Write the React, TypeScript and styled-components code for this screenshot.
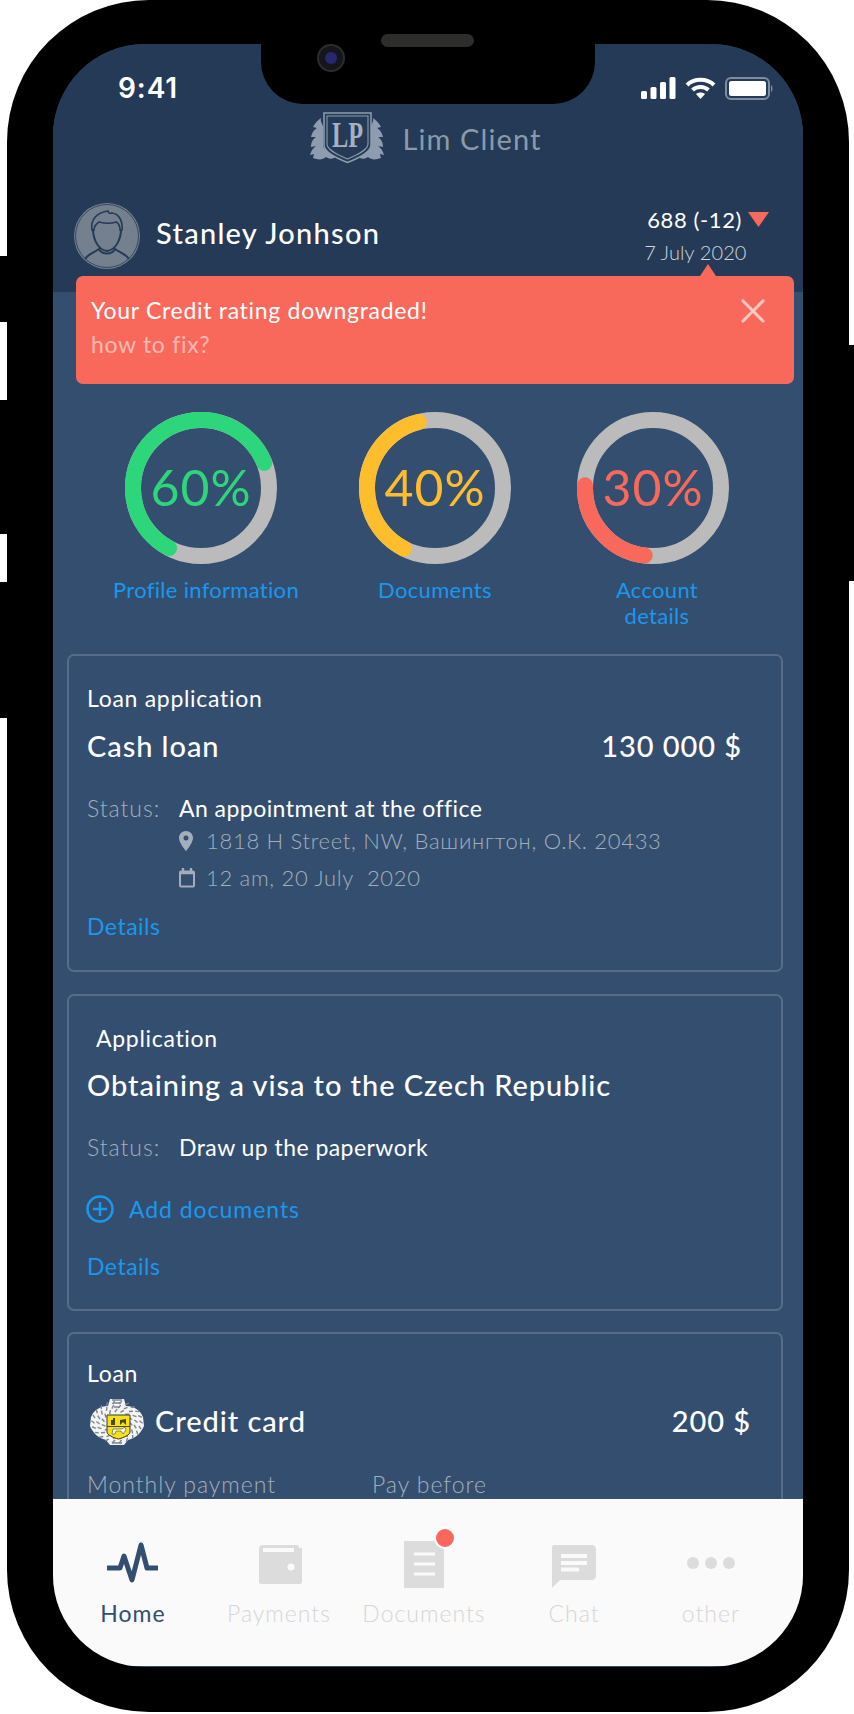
import React from "react";
import styled, { createGlobalStyle } from "styled-components";

const Global = createGlobalStyle`
  html, body { margin: 0; padding: 0; background: #fff; }
  body { width: 854px; height: 1714px; overflow: hidden; font-family: Lato, "Noto Sans", sans-serif; font-weight: 300; }
  * { box-sizing: border-box; }
`;

const Page = styled.div`
  position: relative;
  width: 854px;
  height: 1714px;
  padding-left: 7px;
`;
const SideButton = styled.div<{ $side: "left" | "right"; $top: number; $h: number }>`
  position: absolute;
  ${(p) => (p.$side === "left" ? "left: 0;" : "right: 0;")}
  top: ${(p) => p.$top}px;
  width: 10px;
  height: ${(p) => p.$h}px;
  background: #000;
`;
const Frame = styled.div`
  position: relative;
  width: 842px;
  height: 1712px;
  padding: 44px 46px 45px;
  background: #000;
  border-radius: 142px;
`;
const Notch = styled.div`
  position: absolute;
  left: 254px;
  top: 30px;
  width: 334px;
  height: 74px;
  background: #000;
  border-radius: 0 0 42px 42px;
`;
const Camera = styled.div`
  position: absolute;
  left: 56px;
  top: 14px;
  width: 28px;
  height: 28px;
  border-radius: 50%;
  background: #15151c;
  border: 2px solid #2c2c2c;
  display: flex;
  align-items: center;
  justify-content: center;
  &::after { content: ""; width: 12px; height: 12px; border-radius: 50%; background: #27296e; }
`;
const Speaker = styled.div`
  position: absolute;
  left: 120px;
  top: 4px;
  width: 93px;
  height: 13px;
  border-radius: 7px;
  background: #2d2d2b;
`;
const Screen = styled.div`
  width: 750px;
  height: 1623px;
  border-radius: 92px;
  overflow: hidden;
  background: #344e6f;
  display: flex;
  flex-direction: column;
`;
const Header = styled.header`
  flex: none;
  height: 248px;
  background: #243a56;
  padding-top: 30px;
`;
const StatusBar = styled.div`
  display: flex;
  justify-content: space-between;
  align-items: center;
  height: 28px;
  padding: 0 29px 0 65px;
`;
const Clock = styled.span`
  font-family: Inter, sans-serif;
  font-size: 28px;
  font-weight: 600;
  letter-spacing: 0.9px;
  line-height: 26px;
  color: #fff;
`;
const StatusIcons = styled.div`
  display: flex;
  align-items: center;
  gap: 9px;
`;
const Brand = styled.div`
  display: flex;
  align-items: center;
  justify-content: center;
  height: 52px;
  margin: 10px 5px 0 0;
  gap: 18px;
`;
const BrandName = styled.span`
  font-size: 29px;
  font-weight: 400;
  letter-spacing: 1.1px;
  color: #8b9aab;
  padding-top: 1px;
`;
const UserRow = styled.div`
  display: flex;
  justify-content: space-between;
  margin-top: 39px;
  padding: 0 34px 0 21px;
`;
const UserInfo = styled.div`
  display: flex;
  align-items: center;
  gap: 16px;
`;
const UserName = styled.span`
  font-size: 29px;
  font-weight: 500;
  letter-spacing: 1.27px;
  padding-bottom: 8px;
  color: #fff;
`;
const Score = styled.div`
  display: flex;
  flex-direction: column;
  align-items: flex-start;
`;
const ScoreValue = styled.div`
  display: flex;
  align-items: center;
  gap: 6px;
  height: 32px;
  font-size: 22px;
  font-weight: 400;
  letter-spacing: 0.6px;
  color: #fff;
`;
const ScoreDate = styled.div`
  font-size: 20px;
  letter-spacing: 0.1px;
  line-height: 26px;
  margin: 4px 0 0 -3px;
  color: #d0d5db;
`;
const Body = styled.main`
  flex: 1;
  min-height: 0;
  overflow: hidden;
  margin-top: -28px;
  padding-top: 12px;
`;
const Alert = styled.div`
  position: relative;
  display: flex;
  justify-content: space-between;
  align-items: flex-start;
  height: 108px;
  margin: 0 9px 0 23px;
  padding: 17px 29px 0 15px;
  background: #f9695b;
  border-radius: 7px;
  &::before {
    content: "";
    position: absolute;
    left: 624px;
    top: -12px;
    border-left: 8px solid transparent;
    border-right: 8px solid transparent;
    border-bottom: 12px solid #f9695b;
  }
`;
const AlertTitle = styled.div`
  font-size: 23px;
  font-weight: 400;
  line-height: 34px;
  letter-spacing: 0.7px;
  color: #fff;
`;
const AlertLink = styled(AlertTitle)`
  color: rgba(255, 255, 255, 0.55);
`;
const CloseIcon = styled.svg`
  margin-top: 6px;
`;
const Rings = styled.section`
  display: grid;
  grid-template-columns: 296px 172px 264px;
  margin-top: 28px;
`;
const RingItem = styled.div`
  display: flex;
  flex-direction: column;
  align-items: center;
`;
const RingBox = styled.div`
  position: relative;
  width: 152px;
  height: 152px;
`;
const RingValue = styled.span<{ $color: string }>`
  position: absolute;
  inset: 0;
  display: flex;
  align-items: center;
  justify-content: center;
  padding-bottom: 2px;
  font-size: 50px;
  font-weight: 400;
  letter-spacing: 1px;
  color: ${(p) => p.$color};
`;
const RingLabel = styled.div<{ $shift: number; $w?: number }>`
  margin-top: 13px;
  padding-left: ${(p) => p.$shift}px;
  ${(p) => (p.$w ? `width: ${p.$w}px;` : "")}
  font-size: 22px;
  font-weight: 400;
  line-height: 26px;
  letter-spacing: 0.3px;
  text-align: center;
  color: #1a97ee;
`;
const Card = styled.article<{ $top?: number; $min?: number; $pb?: number }>`
  margin: ${(p) => p.$top ?? 22}px 20px 0 14px;
  padding: 29px 18px ${(p) => p.$pb ?? 30}px;
  border: 2px solid #566c87;
  border-radius: 7px;
  ${(p) => (p.$min ? `min-height: ${p.$min}px;` : "")}
`;
const CardLabel = styled.div<{ $indent?: number }>`
  font-size: 23px;
  font-weight: 400;
  line-height: 26px;
  letter-spacing: 0.7px;
  padding-left: ${(p) => p.$indent ?? 0}px;
  color: #fff;
`;
const CardHead = styled.div<{ $mr: number; $mt: number }>`
  display: flex;
  justify-content: space-between;
  align-items: center;
  margin: ${(p) => p.$mt}px ${(p) => p.$mr}px 0 0;
`;
const CardTitle = styled.div`
  font-size: 29px;
  font-weight: 500;
  line-height: 34px;
  letter-spacing: 0.93px;
  color: #fff;
`;
const StatusRow = styled.div`
  display: flex;
  margin-top: 30px;
  font-size: 23px;
  line-height: 30px;
  letter-spacing: 0.45px;
`;
const Muted = styled.span<{ $w?: number }>`
  ${(p) => (p.$w ? `width: ${p.$w}px;` : "")}
  letter-spacing: 0.95px;
  color: #a3aebc;
`;
const Bright = styled.span`
  font-weight: 400;
  color: #fff;
`;
const MetaRow = styled.div<{ $mt: number }>`
  display: flex;
  align-items: center;
  gap: 11px;
  margin: ${(p) => p.$mt}px 0 0 92px;
  font-size: 22px;
  line-height: 30px;
  letter-spacing: 0.7px;
  color: #a3aebc;
`;
const MetaIcon = styled.svg`
  flex: none;
`;
const Details = styled.div<{ $mt: number }>`
  margin-top: ${(p) => p.$mt}px;
  font-size: 23px;
  font-weight: 400;
  line-height: 26px;
  letter-spacing: 0.5px;
  color: #1a97ee;
`;
const AddRow = styled.div`
  display: flex;
  align-items: center;
  gap: 15px;
  margin: 32px 0 0 -1px;
  font-size: 23px;
  font-weight: 400;
  line-height: 30px;
  letter-spacing: 0.95px;
  color: #1a97ee;
`;
const CreditLabel = styled(CardLabel)`
  margin-top: -3px;
`;
const CreditHead = styled(CardHead)`
  height: 48px;
`;
const CreditTitle = styled.div`
  display: flex;
  align-items: center;
  gap: 11px;
  margin-left: 3px;
`;
const Columns = styled.div`
  display: grid;
  grid-template-columns: 285px 1fr;
  margin-top: 24px;
  font-size: 23px;
  line-height: 30px;
`;
const TabBar = styled.nav`
  flex: none;
  display: grid;
  grid-template-columns: 160px 132px 158px 142px 132px;
  height: 167px;
  margin-bottom: 1px;
  padding-top: 39px;
  background: #fafafa;
`;
const Tab = styled.div<{ $active?: boolean }>`
  position: relative;
  display: flex;
  flex-direction: column;
  align-items: center;
  font-size: 23px;
  font-weight: ${(p) => (p.$active ? 400 : 300)};
  line-height: 26px;
  letter-spacing: 1px;
  white-space: nowrap;
  color: ${(p) => (p.$active ? "#344e6f" : "#d6d6d6")};
`;
const TabIcon = styled.svg`
  width: 60px;
  height: 52px;
  margin-bottom: 10px;
`;
const Badge = styled.span`
  position: absolute;
  left: 89px;
  top: -11px;
  width: 22px;
  height: 22px;
  border-radius: 50%;
  background: #fb675c;
  border: 2px solid #fff;
`;

function Ring({ color, value, end, span }: { color: string; value: string; end: number; span: number }) {
  const r = 68;
  const c = 2 * Math.PI * r;
  return (
    <RingBox>
      <svg width="152" height="152" viewBox="0 0 152 152">
        <circle cx="76" cy="76" r={r} fill="none" stroke="#bbbbbb" strokeWidth="16" />
        <circle
          cx="76"
          cy="76"
          r={r}
          fill="none"
          stroke={color}
          strokeWidth="16"
          strokeLinecap="round"
          strokeDasharray={`${(span / 360) * c} ${c}`}
          transform={`rotate(${end} 76 76)`}
        />
      </svg>
      <RingValue $color={color}>{value}</RingValue>
    </RingBox>
  );
}

const Signal = () => (
  <svg width="35" height="22" viewBox="0 0 35 22" fill="#fff">
    <rect x="0" y="14" width="6" height="8" rx="1.5" />
    <rect x="9.5" y="10" width="6" height="12" rx="1.5" />
    <rect x="19" y="5" width="6" height="17" rx="1.5" />
    <rect x="28.5" y="0" width="6" height="22" rx="1.5" />
  </svg>
);
const Wifi = () => (
  <svg width="31" height="22" viewBox="0 0 31 22" fill="none" stroke="#fff" strokeWidth="4">
    <path d="M2 8 C9 1 22 1 29 8" />
    <path d="M7.5 13 C12 9 19 9 23.5 13" />
    <path d="M15.5 22 L11 17 C13.5 15 17.5 15 20 17 Z" fill="#fff" stroke="none" />
  </svg>
);
const Battery = () => (
  <svg width="49" height="23" viewBox="0 0 49 23">
    <rect x="1" y="1" width="43" height="21" rx="5" fill="none" stroke="#7f8da0" strokeWidth="2" />
    <rect x="4" y="4" width="37" height="15" rx="2.5" fill="#fff" />
    <path d="M46 8 C48 9 48 14 46 15 Z" fill="#7f8da0" />
  </svg>
);

const Wing = () => (
  <path
    d="M11 6 C10 10 13 12 13 15 L13 34 C14 38 20 41 27 44 C24 47 20 48 16 45 C13 48 8 48 3 46 L4 42 L0 43 C1 39 3 36 6 34 L1 35 C1 30 3 27 6 25 L1 25 C2 20 5 17 7 16 L3 15 C5 11 8 8 11 6 Z"
    fill="#8d9cae"
  />
);

const BrandLogo = () => (
  <svg width="75" height="52" viewBox="0 0 75 52">
    <Wing />
    <g transform="translate(74 0) scale(-1 1)">
      <Wing />
    </g>
    <path d="M14 1 H61 V33 C61 40 49 46 37.5 50.5 C26 46 14 40 14 33 Z" fill="#243a56" stroke="#8d9cae" strokeWidth="1.6" />
    <path d="M17 4 H58 V32 C58 38 47 43 37.5 47 C28 43 17 38 17 32 Z" fill="none" stroke="#8d9cae" strokeWidth="1.1" />
    <text x="22" y="35" textLength="31" lengthAdjust="spacingAndGlyphs" fontFamily="'Liberation Serif', serif" fontWeight="700" fontSize="35" fill="#a5b1c0">LP</text>
  </svg>
);

const Avatar = () => (
  <svg width="66" height="66" viewBox="0 0 66 66">
    <circle cx="33" cy="33" r="33" fill="#75808f" />
    <circle cx="33" cy="33" r="31.5" fill="none" stroke="#243a56" strokeWidth="0.8" />
    <path d="M18 27 C16 16 24 9 34 8 C34 10 36 11 38 10 C45 11 49 18 48 27 L46 27 C46 22 44 20 42 19 C36 21 29 20 25 19 C22 21 20 23 20 27 Z" fill="#75808f" stroke="#243a56" strokeWidth="1.6" />
    <path d="M19 26 C19 36 24 47 33 48 C42 47 47 36 47 26" fill="none" stroke="#243a56" strokeWidth="2" />
    <path d="M11 56 C14 51 21 49 25 46 C28 52 38 52 41 46 C45 49 52 51 55 56" fill="none" stroke="#243a56" strokeWidth="2" />
  </svg>
);

const TinkoffLogo = () => {
  const flecks: { x: number; y: number; a: number }[] = [];
  [24, 19, 14].forEach((rad, ring) => {
    for (let i = 0; i < 22 - ring * 4; i++) {
      const a = (i / (22 - ring * 4)) * Math.PI * 2 + ring * 0.3;
      flecks.push({ x: 27 + Math.cos(a) * rad, y: 25 + Math.sin(a) * rad * 0.82, a: (a * 180) / Math.PI + 40 });
    }
  });
  return (
    <svg width="54" height="48" viewBox="0 0 54 48">
      <path d="M20 2 H34 L36 9 C44 9 50 13 53 20 L54 29 C51 36 46 41 38 43 L34 48 H20 L16 43 C8 41 3 36 0 29 L1 20 C4 13 10 9 18 9 Z" fill="#f4f4f4" />
      {flecks.map((f, i) => (
        <rect key={i} x={f.x - 2} y={f.y - 0.7} width="4" height="1.4" fill="#7c8591" transform={`rotate(${f.a} ${f.x} ${f.y})`} />
      ))}
      <path d="M22 3 H32 M23 6 H31 M24 10 H30 M22 46 H32" stroke="#7c8591" strokeWidth="1.3" />
      <path d="M17 18 H40 V35 C40 38 33 41 28.5 42 C24 41 17 38 17 35 Z" fill="#f7e014" stroke="#39392c" strokeWidth="1" />
      <path d="M17 29.5 H40" stroke="#39392c" strokeWidth="0.9" />
      <path d="M21 28 V23 H23 V21 H25 V28 Z M30 28 L30 23 L36 22 L36 28 L33 25 Z" fill="#46463a" />
      <path d="M22 37 L23 32 L32 32 L35 30 L36 33 L33 37 L31 34 L26 34 L25 37 Z" fill="#f8f8ee" stroke="#46463a" strokeWidth="0.6" />
    </svg>
  );
};

export default function App() {
  return (
    <>
      <Global />
      <Page>
        <SideButton $side="left" $top={256} $h={66} />
        <SideButton $side="left" $top={400} $h={134} />
        <SideButton $side="left" $top={582} $h={136} />
        <SideButton $side="right" $top={345} $h={236} />
        <Frame>
          <Screen>
            <Header>
              <StatusBar>
                <Clock>9:41</Clock>
                <StatusIcons>
                  <Signal />
                  <Wifi />
                  <Battery />
                </StatusIcons>
              </StatusBar>
              <Brand>
                <BrandLogo />
                <BrandName>Lim Client</BrandName>
              </Brand>
              <UserRow>
                <UserInfo>
                  <Avatar />
                  <UserName>Stanley Jonhson</UserName>
                </UserInfo>
                <Score>
                  <ScoreValue>
                    688 (-12)
                    <svg width="21" height="15" viewBox="0 0 21 15">
                      <path d="M0 0 H21 L10.5 15 Z" fill="#f9695b" />
                    </svg>
                  </ScoreValue>
                  <ScoreDate>7 July 2020</ScoreDate>
                </Score>
              </UserRow>
            </Header>
            <Body>
              <Alert>
                <div>
                  <AlertTitle>Your Credit rating downgraded!</AlertTitle>
                  <AlertLink>how to fix?</AlertLink>
                </div>
                <CloseIcon width="24" height="24" viewBox="0 0 24 24" stroke="rgba(255,255,255,0.65)" strokeWidth="3">
                  <path d="M1 1 L23 23 M23 1 L1 23" />
                </CloseIcon>
              </Alert>
              <Rings>
                <RingItem>
                  <Ring color="#2ed67b" value="60%" end={118} span={220} />
                  <RingLabel $shift={10}>Profile information</RingLabel>
                </RingItem>
                <RingItem>
                  <Ring color="#fdbd2d" value="40%" end={117} span={139} />
                  <RingLabel $shift={0}>Documents</RingLabel>
                </RingItem>
                <RingItem>
                  <Ring color="#f9695b" value="30%" end={97} span={85} />
                  <RingLabel $shift={8} $w={120}>Account details</RingLabel>
                </RingItem>
              </Rings>
              <Card $top={25} $pb={31}>
                <CardLabel>Loan application</CardLabel>
                <CardHead $mr={21} $mt={18}>
                  <CardTitle>Cash loan</CardTitle>
                  <CardTitle>130 000 $</CardTitle>
                </CardHead>
                <StatusRow>
                  <Muted $w={92}>Status:</Muted>
                  <Bright>An appointment at the office</Bright>
                </StatusRow>
                <MetaRow $mt={3}>
                  <MetaIcon width="16" height="20" viewBox="0 0 16 20">
                    <path fillRule="evenodd" d="M7 0 C3 0 0 3 0 7 C0 12 7 20 7 20 C7 20 14 12 14 7 C14 3 11 0 7 0 Z M7 4.5 A2.5 2.5 0 1 1 7 9.5 A2.5 2.5 0 1 1 7 4.5 Z" fill="#a3aebc" />
                  </MetaIcon>
                  1818 H Street, NW, Вашингтон, О.К. 20433
                </MetaRow>
                <MetaRow $mt={7}>
                  <MetaIcon width="16" height="20" viewBox="0 0 16 20" fill="none" stroke="#a3aebc" strokeWidth="2">
                    <rect x="1" y="3.5" width="14" height="15" rx="1" />
                    <path d="M1 5 H15 M4 0 V3 M12 0 V3" strokeWidth="2.4" />
                  </MetaIcon>
                  12 am, 20 July&nbsp; 2020
                </MetaRow>
                <Details $mt={20}>Details</Details>
              </Card>
              <Card>
                <CardLabel $indent={9}>Application</CardLabel>
                <CardHead $mr={21} $mt={17}>
                  <CardTitle>Obtaining a visa to the Czech Republic</CardTitle>
                </CardHead>
                <StatusRow>
                  <Muted $w={92}>Status:</Muted>
                  <Bright>Draw up the paperwork</Bright>
                </StatusRow>
                <AddRow>
                  <svg width="28" height="28" viewBox="0 0 28 28" fill="none" stroke="#1a97ee" strokeWidth="2.6">
                    <circle cx="14" cy="14" r="12.5" />
                    <path d="M14 7 V21 M7 14 H21" />
                  </svg>
                  Add documents
                </AddRow>
                <Details $mt={29}>Details</Details>
              </Card>
              <Card $top={21} $min={300}>
                <CreditLabel>Loan</CreditLabel>
                <CreditHead $mr={12} $mt={11}>
                  <CreditTitle>
                    <TinkoffLogo />
                    <CardTitle>Credit card</CardTitle>
                  </CreditTitle>
                  <CardTitle>200 $</CardTitle>
                </CreditHead>
                <Columns>
                  <Muted>Monthly payment</Muted>
                  <Muted>Pay before</Muted>
                </Columns>
              </Card>
            </Body>
            <TabBar>
              <Tab $active>
                <TabIcon viewBox="0 0 60 52" fill="none" stroke="#344e6f" strokeWidth="5">
                  <path d="M4 30 H17 L21 18 L29 42 L38 7 L44 30 H55" strokeLinejoin="round" />
                </TabIcon>
                Home
              </Tab>
              <Tab>
                <TabIcon viewBox="0 0 60 52">
                  <path d="M14 7 H48 C49 7 50 8 50 10 H53 V44 C53 45 52 46 51 46 H13 C11 46 10 45 10 44 V10 C10 8 12 7 14 7 Z" fill="#dcdcdc" />
                  <rect x="14" y="10" width="31" height="4" fill="#fafafa" />
                  <circle cx="42" cy="29" r="3.6" fill="#fafafa" />
                </TabIcon>
                Payments
              </Tab>
              <Tab>
                <TabIcon viewBox="0 0 60 52">
                  <path d="M10 3 H50 V50 H10 Z" fill="#dcdcdc" />
                  <path d="M20 16 H41 M20 26 H41 M20 36 H41" stroke="#fafafa" strokeWidth="3" />
                </TabIcon>
                <Badge />
                Documents
              </Tab>
              <Tab>
                <TabIcon viewBox="0 0 60 52">
                  <path d="M10 7 H48 C50 7 52 9 52 11 V38 C52 40 50 42 48 42 H16 L8 50 V9 C8 8 9 7 10 7 Z" fill="#dcdcdc" />
                  <path d="M17 18 H43 M17 25 H43 M17 31.5 H35" stroke="#fafafa" strokeWidth="4" />
                </TabIcon>
                Chat
              </Tab>
              <Tab>
                <TabIcon viewBox="0 0 60 52" fill="#dcdcdc">
                  <circle cx="12" cy="25" r="6" />
                  <circle cx="30" cy="25" r="6" />
                  <circle cx="48" cy="25" r="6" />
                </TabIcon>
                other
              </Tab>
            </TabBar>
          </Screen>
          <Notch>
            <Camera />
            <Speaker />
          </Notch>
        </Frame>
      </Page>
    </>
  );
}
